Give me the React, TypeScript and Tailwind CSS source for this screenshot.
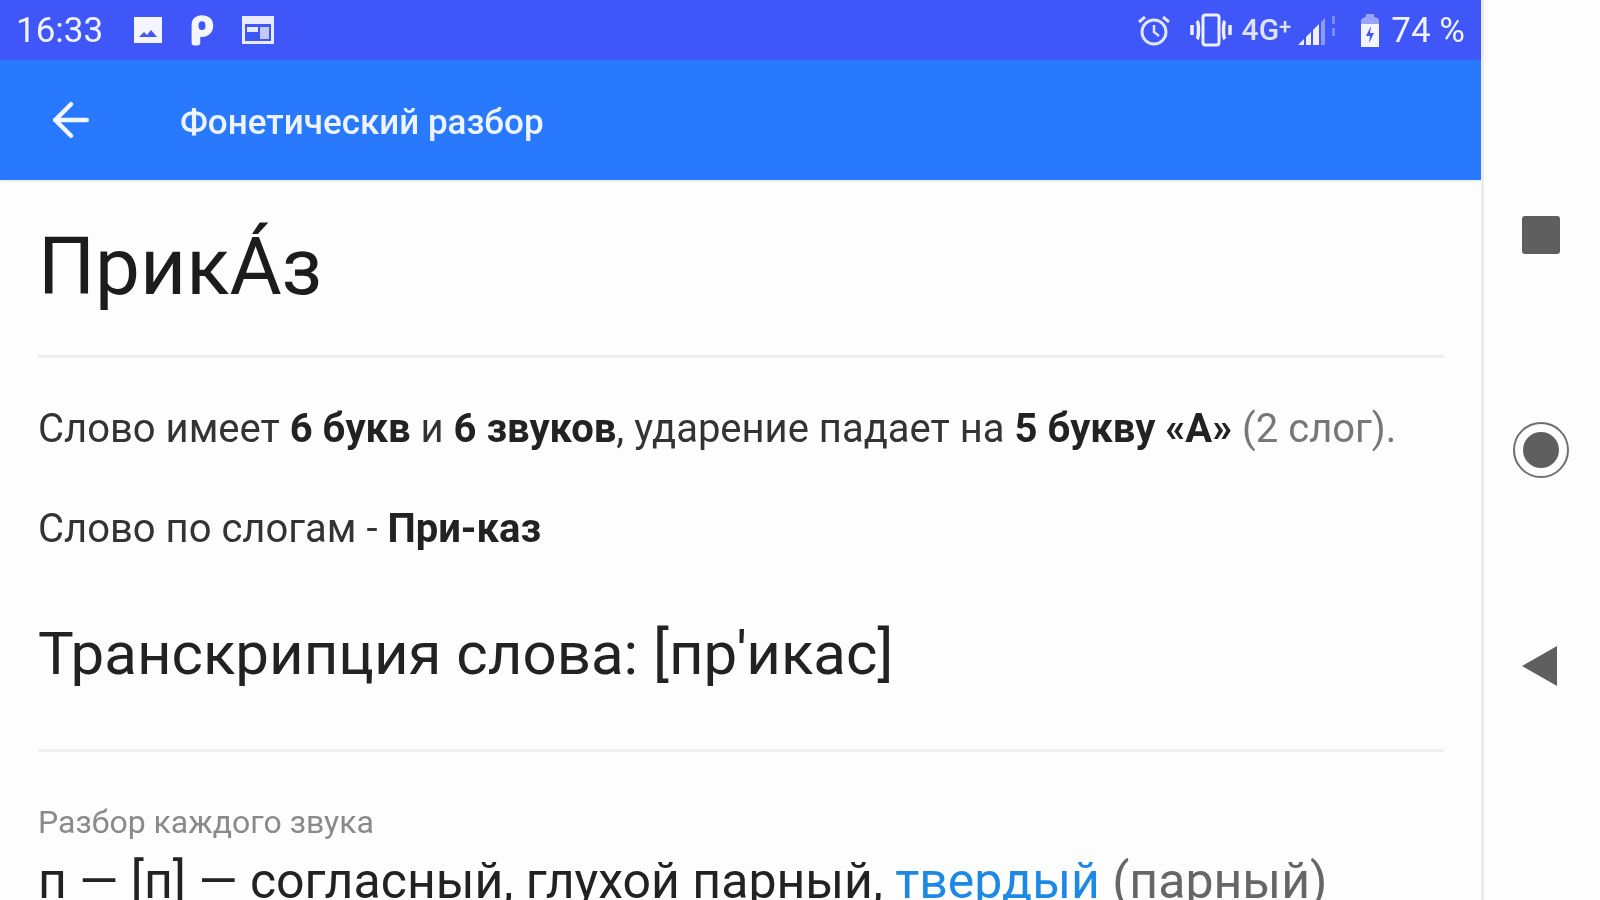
import { ArrowLeft } from "lucide-react"

function StatusLeft() {
  return (
    <div className="flex items-center">
      <span className="text-[35px] leading-none text-[#f0f2ff]">16:33</span>
      <svg className="ml-[30px] w-[30px] h-[30px]" viewBox="0 0 30 30">
        <path fillRule="evenodd" fill="#f4f5ff" d="M1 2h28v26H1z M6 22l5-5 3 3 4-5 6 7z" />
      </svg>
      <svg className="ml-[26px] w-[26px] h-[36px]" viewBox="0 0 30 36">
        <path fillRule="evenodd" fill="#f4f5ff" d="M3 12C3 5 8 1 15 1s13 4 13 12-6 13-13 13h-2v7c0 2-2 3-5 3s-5-1-5-3z M11 13c0-3 1-5 4-5s4 2 4 5-1 5-4 5-4-2-4-5z" />
      </svg>
      <svg className="ml-[26px] w-[34px] h-[34px]" viewBox="0 0 34 34">
        <path fillRule="evenodd" fill="#e8eaff" d="M1 3h32v28H1z M4 11v17h26V11z" />
        <path fill="#e8eaff" d="M6 14h11v5H6z" />
        <path fill="#c2c9ff" d="M19 14h9v12h-9z" />
      </svg>
    </div>
  )
}

function StatusRight() {
  return (
    <div className="flex items-center">
      <svg className="w-[34px] h-[34px]" viewBox="0 0 34 34" fill="none" stroke="#e0e4ff">
        <circle cx="17" cy="19" r="12" strokeWidth="3" />
        <path d="M17 12v7l5 4" strokeWidth="2.5" />
        <path d="M2 9l6-5M32 9l-6-5" strokeWidth="3" />
      </svg>
      <svg className="ml-[18px] w-[44px] h-[34px]" viewBox="0 0 44 34" fill="none" stroke="#eef0ff">
        <rect x="14" y="2" width="16" height="30" rx="2.5" strokeWidth="3" />
        <path d="M8 8c2 2 2 16 0 18M3 12v10M36 8c-2 2-2 16 0 18M41 12v10" strokeWidth="3.5" />
      </svg>
      <span className="ml-[9px] text-[30px] leading-none font-medium text-[#dfe2ff]">4G<sup className="text-[22px] -top-[6px]">+</sup></span>
      <svg className="ml-[6px] w-[42px] h-[34px]" viewBox="0 0 42 34">
        <path fill="#eef0ff" d="M1 32 7 26v6zM9 24l5-5v13H9zM16 17l6-6v21h-6z" />
        <path fill="#8e99ff" d="M24 9l4-4v27h-4z" />
        <path fill="#7c88ff" d="M35 3h3v8h-3zM35 15h3v8h-3z" />
      </svg>
      <svg className="ml-[20px] w-[22px] h-[36px]" viewBox="0 0 22 36">
        <path fill="#9aa4ff" d="M2 9c0-3 4-4 5-4V2h8v3c2 0 5 1 5 4v3H2z" />
        <path fill="#f4f5ff" d="M2 12h18v23H2z" />
        <path fill="#3f57f8" d="M12 14l-5 10h4l-1 7 5-10h-4z" />
      </svg>
      <span className="ml-[10px] text-[35px] leading-none text-[#f0f2ff]">74 %</span>
    </div>
  )
}

function NavBar() {
  return (
    <aside className="flex-1 flex flex-col items-center pt-[36px] pr-[2px]">
      <div className="w-[38px] h-[38px] mt-[180px] rounded-[3px] bg-[#5f5f5f]" />
      <div className="mt-[168px] w-[56px] h-[56px] rounded-full border-2 border-[#6f6f6f] flex items-center justify-center">
        <div className="w-[36px] h-[36px] rounded-full bg-[#5f5f5f]" />
      </div>
      <svg className="mt-[167px] w-[38px] h-[42px] -translate-x-[1px]" viewBox="0 0 38 42">
        <path fill="#5f5f5f" d="M1 21 36 1v40z" />
      </svg>
    </aside>
  )
}

export default function App() {
  return (
    <main className="h-[900px] w-[1600px] overflow-hidden flex bg-[#fdfdfd] font-['Roboto',sans-serif] blur-[0.7px]">
      <section className="w-[1481px] shrink-0 h-full overflow-hidden">
        <div className="h-[60px] bg-[#3f57f8] flex items-center justify-between pl-[16px] pr-[16px]">
          <StatusLeft />
          <StatusRight />
        </div>
        <header className="h-[120px] bg-[#2979ff] flex items-center shadow-[0_1px_2px_rgba(0,0,0,0.12)]">
          <ArrowLeft className="ml-[44px] w-[54px] h-[54px] text-[#f2f6ff]" strokeWidth={2} />
          <h1 className="ml-[82px] pt-[6px] text-[35px] font-medium text-[#eef4ff]">Фонетический разбор</h1>
        </header>
        <div className="pl-[38px] pr-[37px]">
          <h2 className="pt-[33px] h-[178px] text-[80px] leading-[108px] text-[#1c1c1c] border-b-[3px] border-[#eeeeee]">ПрикА́з</h2>
          <p className="mt-[47px] text-[40px] leading-[48px] text-[#333333] whitespace-nowrap">
            Слово имеет <b className="font-bold text-[#222222]">6 букв</b> и <b className="font-bold text-[#222222]">6 звуков</b>, ударение падает на <b className="font-bold text-[#222222]">5 букву «А»</b> <span className="text-[#777777]">(2 слог).</span>
          </p>
          <p className="mt-[52px] text-[40px] leading-[48px] text-[#333333]">
            Слово по слогам - <b className="font-bold text-[#222222]">При-каз</b>
          </p>
          <p className="mt-[63px] pb-[57px] text-[60px] leading-[76px] text-[#222222] border-b-[3px] border-[#f0f0f0]">Транскрипция слова: [пр'икас]</p>
          <p className="mt-[50px] text-[32px] leading-[40px] text-[#8a8a8a]">Разбор каждого звука</p>
          <p className="mt-[7px] text-[50px] leading-[64px] text-[#222222] whitespace-nowrap">
            п — [п] — согласный, глухой парный, <span className="text-[#1e88e5]">твердый</span> <span className="text-[#666666]">(парный)</span>
          </p>
        </div>
      </section>
      <div className="w-[3px] bg-[#ececec]" />
      <NavBar />
    </main>
  )
}
